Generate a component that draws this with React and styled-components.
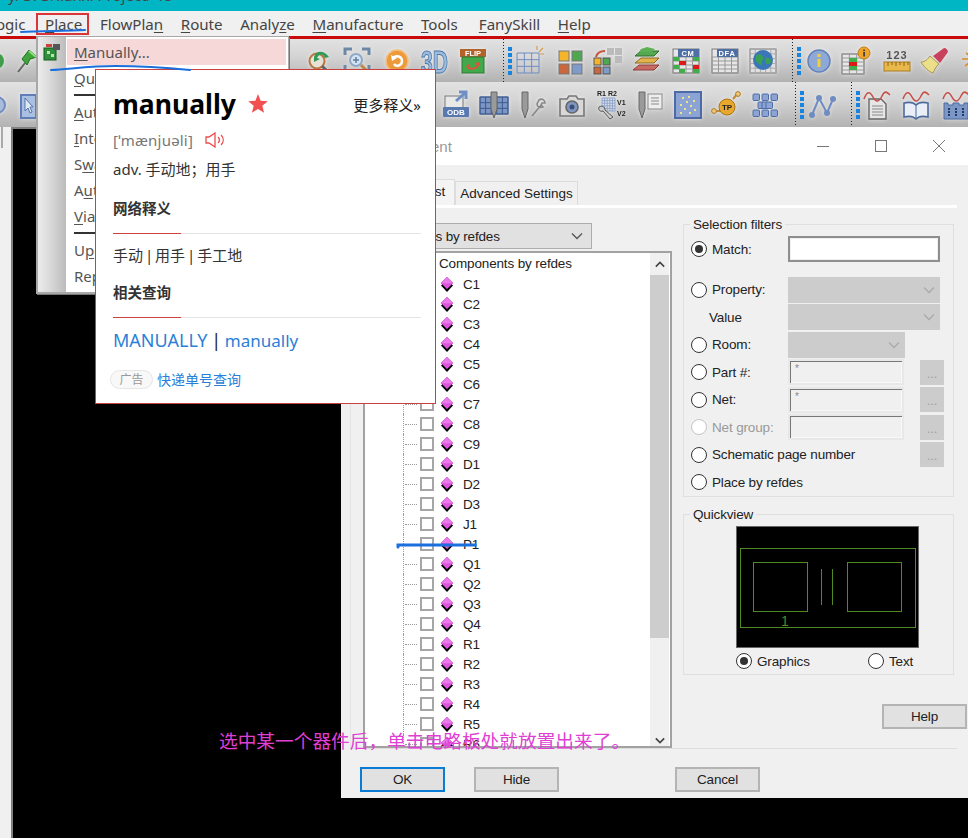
import styled, { createGlobalStyle } from "styled-components";

const GlobalStyle = createGlobalStyle`
  html, body { margin: 0; padding: 0; background: #000; }
  * { box-sizing: border-box; }
`;

const Page = styled.div`
  position: relative;
  width: 968px;
  height: 838px;
  overflow: hidden;
  display: flex;
  flex-direction: column;
  background: #000;
  font-family: "Liberation Sans", sans-serif;
`;

/* top of the app */
const CaptionBar = styled.div`
  height: 11px;
  flex: none;
  overflow: hidden;
  background: #00b6c4;
  color: #444;
  font: 15px/15px "Noto Sans", sans-serif;
  padding-left: 8px;
  span { display: block; margin-top: -12px; white-space: nowrap; }
`;

const MenuBar = styled.div`
  height: 25px;
  flex: none;
  display: flex;
  align-items: center;
  gap: 17.6px;
  background: #f0f0f0;
  margin-left: -12px;
  font: 15.1px "Noto Sans", sans-serif;
  color: #444;
  u { text-underline-offset: 2px; }
`;

const MenuTitle = styled.div`
  position: relative;
  white-space: nowrap;
  margin-left: ${(p) => p.$ml || 0}px;
  ${(p) => p.$active && `
    &::after {
      content: "";
      position: absolute;
      left: -9px;
      right: -7px;
      top: -1px;
      bottom: -1px;
      border: 2px solid #d9363a;
    }
  `}
`;

const RedRule = styled.div`
  height: 3px;
  flex: none;
  background: #c80a0a;
`;

const ToolRow = styled.div`
  height: ${(p) => p.$h}px;
  flex: none;
  display: flex;
  align-items: center;
  overflow: hidden;
  background: linear-gradient(#e2e2e2, #d4d4d4 40%, #b2b2b2);
`;

const ToolSlot = styled.div`
  flex: none;
  display: flex;
  align-items: center;
  justify-content: center;
  height: 100%;
`;

const Ico = styled.svg`
  display: block;
  width: 32px;
  height: 32px;
  flex: none;
  filter: drop-shadow(0 0 2px rgba(255, 255, 255, 0.55));
`;

const DotSep = styled.div`
  width: 1px;
  height: 100%;
  background: repeating-linear-gradient(#222 0 1px, transparent 1px 3px);
`;

const Grip = styled.div`
  width: 4px;
  height: 28px;
  background: repeating-linear-gradient(#1684e0 0 4px, transparent 4px 6px);
`;

const Workspace = styled.div`
  flex: 1;
  display: flex;
`;

const LeftRail = styled.div`
  width: 11px;
  flex: none;
  background: #f0f0f0;
  &::before {
    content: "";
    display: block;
    width: 2px;
    height: 21px;
    margin-left: 1px;
    background: #aaa;
  }
`;

const Canvas = styled.div`
  flex: 1;
  background: #000;
  border-left: 2px solid #808080;
  border-top: 2px solid #808080;
`;

/* place menu */
const DropMenu = styled.div`
  position: absolute;
  left: 36px;
  top: 36px;
  width: 253px;
  height: 258px;
  display: flex;
  background: #fff;
  border: 1px solid #a8a8a8;
  border-width: 1px 1px 2px 2px;
  box-shadow: 1px 1px 0 #777;
  font: 15px "Noto Sans", sans-serif;
  color: #555;
  u { text-underline-offset: 2px; }
`;

const MenuGutter = styled.div`
  width: 28px;
  flex: none;
  background: linear-gradient(90deg, #ececec, #d8d8d8 45%, #bcbcbc);
  padding: 6px 0 0 5px;
`;

const MenuList = styled.div`
  flex: 1;
  padding: 2px 2px 0 1px;
`;

const MenuRow = styled.div`
  height: 26px;
  display: flex;
  align-items: center;
  padding-left: 7px;
  white-space: nowrap;
  background: ${(p) => (p.$hot ? "#f6d8d8" : "transparent")};
`;

const MenuLine = styled.div`
  height: 2px;
  margin: 3px 0 3px 7px;
  background: #333;
`;

/* dictionary popup */
const Popup = styled.div`
  position: absolute;
  left: 95px;
  top: 69px;
  width: 341px;
  height: 335px;
  background: #fff;
  border: 1px solid #c9403f;
  padding: 15px 14px 0 17px;
  font: 15px "Noto Sans", "Noto Sans CJK SC", sans-serif;
  color: #333;
`;

const PopupHead = styled.div`
  height: 38px;
  display: flex;
  align-items: center;
`;

const Word = styled.div`
  font-size: 26.5px;
  font-weight: 700;
  color: #000;
`;

const MoreLink = styled.div`
  margin-left: auto;
  font-size: 15px;
  color: #222;
`;

const Phonetic = styled.div`
  margin-top: 6px;
  height: 22px;
  display: flex;
  align-items: center;
  gap: 12px;
  color: #777;
  font-size: 15px;
  letter-spacing: 0.2px;
`;

const Line = styled.div`
  margin-top: ${(p) => p.$mt}px;
  height: 20px;
  line-height: 20px;
  white-space: nowrap;
  word-spacing: ${(p) => p.$ws || 0}px;
`;

const SectionTitle = styled(Line)`
  font-weight: 700;
  font-size: 14.5px;
  color: #333;
`;

const Divider = styled.div`
  margin-top: 15px;
  height: 1px;
  background: linear-gradient(90deg, #d0403e 68px, #e4e4e4 68px);
`;

const Related = styled.div`
  margin-top: 10px;
  height: 24px;
  line-height: 24px;
  font-size: 18px;
  color: #222;
  word-spacing: -1px;
  a { color: #2a7fd8; }
  a + a { font-size: 17px; word-spacing: 0; }
`;

const AdRow = styled.div`
  margin: 17px 0 0 -3px;
  height: 20px;
  display: flex;
  align-items: center;
  gap: 4px;
`;

const AdPill = styled.div`
  width: 43px;
  height: 19px;
  border: 1px solid #e6e6e6;
  border-radius: 10px;
  background: #f8f8f8;
  color: #999;
  font-size: 12px;
  line-height: 17px;
  text-align: center;
`;

const AdLink = styled.div`
  font-size: 14px;
  color: #2a7fd8;
`;

/* placement dialog */
const Dialog = styled.div`
  position: absolute;
  left: 341px;
  top: 127px;
  width: 627px;
  height: 671px;
  background: #f0f0f0;
  display: flex;
  flex-direction: column;
  font-size: 13.5px;
  letter-spacing: -0.15px;
  color: #222;
`;

const DialogTitle = styled.div`
  height: 38px;
  flex: none;
  background: #fff;
  display: flex;
  align-items: center;
  padding-left: 40px;
  color: #999;
  font-size: 15px;
  letter-spacing: 0;
`;

const TitleButtons = styled.div`
  margin-left: auto;
  display: flex;
`;

const TitleButton = styled.div`
  width: 58px;
  display: flex;
  justify-content: center;
`;

const Tabs = styled.div`
  flex: none;
  display: flex;
  align-items: flex-end;
  padding: 14px 0 0 6px;
`;

const Tab = styled.div`
  height: ${(p) => (p.$on ? 26 : 24)}px;
  width: ${(p) => p.$w}px;
  background: ${(p) => (p.$on ? "#f4f4f4" : "#f0f0f0")};
  border: 1px solid #dcdcdc;
  border-bottom: 0;
  line-height: 24px;
  text-align: center;
  white-space: nowrap;
  letter-spacing: 0;
`;

const Pane = styled.div`
  margin-left: 9px;
  width: 607px;
  height: 544px;
  flex: none;
  display: flex;
  border-top: 3px solid #fff;
  border-left: 1px solid #e4e4e4;
  border-bottom: 1px solid #dedede;
`;

const ListColumn = styled.div`
  margin-left: 12px;
  width: 309px;
  flex: none;
  display: flex;
  flex-direction: column;
  gap: 2px;
  padding-top: 15px;
`;

const Combo = styled.div`
  width: 229px;
  height: 26px;
  flex: none;
  display: flex;
  align-items: center;
  justify-content: space-between;
  padding: 0 8px 0 3px;
  background: #e1e1e1;
  border: 1px solid #adadad;
`;

const TreeFrame = styled.div`
  flex: 1;
  min-height: 0;
  display: flex;
  background: #fff;
  border: 2px solid #a2a2a2;
  padding-right: 1px;
`;

const TreeList = styled.div`
  flex: 1;
  overflow: hidden;
  padding-top: 1px;
`;

const RootRow = styled.div`
  height: 20px;
  line-height: 20px;
  padding-left: 74px;
`;

const TreeRow = styled.div`
  height: 20px;
  display: flex;
  align-items: center;
  padding-left: 38px;
`;

const Guide = styled.div`
  width: 17px;
  height: 20px;
  flex: none;
  display: flex;
  align-items: center;
  border-left: 1px dotted #9a9a9a;
  &::after {
    content: "";
    width: 12px;
    margin-left: 1px;
    border-top: 1px dotted #9a9a9a;
  }
`;

const Check = styled.div`
  width: 14px;
  height: 14px;
  flex: none;
  margin-right: 7px;
  background: #fff;
  border: 2px solid #a6a6a6;
`;

const Gem = styled.svg`
  width: 12px;
  height: 16px;
  flex: none;
  margin-right: 10px;
`;

const Scroller = styled.div`
  width: 19px;
  flex: none;
  display: flex;
  flex-direction: column;
  align-items: center;
  background: #f0f0f0;
`;

const ScrollCap = styled.div`
  height: ${(p) => p.$h}px;
  flex: none;
  display: flex;
  align-items: ${(p) => (p.$end ? "flex-end" : "center")};
  padding-bottom: ${(p) => (p.$end ? 5 : 0)}px;
`;

const ScrollThumb = styled.div`
  width: 19px;
  height: 363px;
  flex: none;
  background: #cdcdcd;
`;

const SideColumn = styled.div`
  margin-left: 11px;
  width: 285px;
  flex: none;
  padding-top: 9px;
  display: flex;
  flex-direction: column;
`;

const Group = styled.fieldset`
  width: 271px;
  margin: 0;
  min-width: 0;
  padding: 4px 7px 0;
  border: 1px solid #dfdfdf;
  height: ${(p) => p.$h}px;
  flex: none;
  & + & { margin-top: 10px; }
`;

const GroupLegend = styled.legend`
  margin-left: -1px;
  padding: 0 3px;
  height: 15px;
  line-height: 15px;
`;

const FilterRow = styled.div`
  height: ${(p) => p.$h || 27.5}px;
  margin-bottom: ${(p) => p.$mb || 0}px;
  display: flex;
  align-items: center;
`;

const Radio = styled.span`
  width: 16px;
  height: 16px;
  flex: none;
  display: flex;
  align-items: center;
  justify-content: center;
  border-radius: 50%;
  background: #fff;
  border: 1px solid ${(p) => (p.$off ? "#c4c4c4" : "#333")};
  &::after {
    content: "";
    width: 8px;
    height: 8px;
    border-radius: 50%;
    background: ${(p) => (p.$on ? "#333" : "transparent")};
  }
`;

const FilterLabel = styled.div`
  width: ${(p) => (p.$plain ? 97 : 81)}px;
  flex: none;
  padding-left: ${(p) => (p.$plain ? 18 : 5)}px;
  white-space: nowrap;
  color: ${(p) => (p.$off ? "#999" : "#222")};
`;

const FilterSpan = styled(FilterLabel)`
  width: auto;
  flex: 1;
`;

const TextField = styled.div`
  width: ${(p) => p.$w}px;
  height: 26px;
  flex: none;
  padding: 2px 0 0 5px;
  font-size: 10px;
  line-height: 12px;
  color: #888;
  background: ${(p) => (p.$white ? "#fff" : "#f0f0f0")};
  border: 2px solid #e8e8e8;
  box-shadow: inset 1px 1px 0 #777, inset -1px -1px 0 #f8f8f8;
  ${(p) => p.$white && `
    border-color: #8e8e8e;
    box-shadow: inset 0 0 0 1px #efefef;
  `}
`;

const GreyCombo = styled.div`
  width: ${(p) => p.$w}px;
  height: 26px;
  flex: none;
  display: flex;
  align-items: center;
  justify-content: flex-end;
  padding-right: 5px;
  background: #cccccc;
`;

const DotsButton = styled.div`
  width: 24px;
  height: 25px;
  flex: none;
  margin-left: ${(p) => p.$ml || 0}px;
  margin-right: ${(p) => p.$mr || 0}px;
  background: #cccccc;
  color: #a0a0a0;
  font-size: 13px;
  line-height: 27px;
  text-align: center;
`;

const ViewScreen = styled.svg`
  display: block;
  width: 183px;
  height: 122px;
  margin-left: 45px;
  background: #000;
  border: 1px solid #666;
`;

const ViewChoices = styled.div`
  margin: 5px 0 0 45px;
  display: flex;
  align-items: center;
  height: 16px;
`;

const ViewChoice = styled.div`
  width: ${(p) => p.$w}px;
  display: flex;
  align-items: center;
  gap: 5px;
`;

const PushButton = styled.div`
  width: 85px;
  height: 25px;
  flex: none;
  background: #e1e1e1;
  border: 2px solid ${(p) => (p.$focus ? "#0a7cd6" : "#b4b4b4")};
  line-height: 21px;
  text-align: center;
  margin-left: ${(p) => p.$ml || 0}px;
`;

const HelpButton = styled(PushButton)`
  margin: 29px 0 0 199px;
`;

const Footer = styled.div`
  flex: none;
  display: flex;
  padding: 18px 0 0 19px;
`;

/* hand drawn notes on top of the screenshot */
const Scribble = styled.svg`
  position: absolute;
  left: 0;
  top: 0;
  width: 968px;
  height: 838px;
  pointer-events: none;
`;

const PinkNote = styled.div`
  position: absolute;
  left: 219px;
  top: 727px;
  font: 18.7px/26px "Noto Sans CJK SC", sans-serif;
  color: #e03fd4;
  white-space: nowrap;
`;

const Down = ({ c = "#555", w = 12 }) => (
  <svg width={w} height={8} viewBox="0 0 12 8">
    <path d="M1 1.5 6 6.5 11 1.5" fill="none" stroke={c} strokeWidth="1.3" />
  </svg>
);

const grid = (x, y, w, h, nx, ny, c) => {
  const out = [];
  for (let i = 0; i <= nx; i++) {
    const px = x + (w * i) / nx;
    out.push(<line key={"x" + i} x1={px} x2={px} y1={y} y2={y + h} stroke={c} />);
  }
  for (let i = 0; i <= ny; i++) {
    const py = y + (h * i) / ny;
    out.push(<line key={"y" + i} x1={x} x2={x + w} y1={py} y2={py} stroke={c} />);
  }
  return out;
};

const Tiny = styled.text`
  font-family: "Liberation Sans", sans-serif;
  font-weight: 700;
`;

const Icon = ({ children }) => <Ico viewBox="0 0 32 32">{children}</Ico>;

const PinIcon = () => (
  <Icon>
    <path d="M8 27 15 18" stroke="#666" strokeWidth="2" />
    <path d="M12 14 19 5l8 7-7 2-3 6z" fill="#3da53a" stroke="#1f6d1f" />
    <path d="M19 6l7 6" stroke="#8fdc7e" strokeWidth="2" />
  </Icon>
);

const ZoomBackIcon = () => (
  <Icon>
    <circle cx="13" cy="16" r="7.5" fill="#e8e2d6" stroke="#b87842" strokeWidth="2" />
    <path d="M18 21 25 28" stroke="#666" strokeWidth="3" />
    <path d="M10 12C12 5 20 5 25 12l-4 1-2-3c-2-1-5 0-6 3l3 1-6 3z" fill="#2f9b57" />
  </Icon>
);

const ZoomFitIcon = () => (
  <Icon>
    <path d="M4 10V4h7M21 4h7v6M28 20v4M4 20v6h7" fill="none" stroke="#6d87a6" strokeWidth="3" />
    <circle cx="15" cy="15" r="6" fill="#d6e3f2" stroke="#8fa8c6" strokeWidth="2" />
    <path d="M15 12v6M12 15h6" stroke="#5f7ea3" strokeWidth="1.5" />
    <path d="M20 20l7 7" stroke="#b88a4a" strokeWidth="3" />
  </Icon>
);

const UndoIcon = () => (
  <Icon>
    <circle cx="16" cy="16" r="11" fill="#ec9a3a" stroke="#f4bd7c" strokeWidth="1.5" />
    <path d="M12 13c3-3 9-2 9 3s-6 6-8 3" fill="none" stroke="#fff" strokeWidth="2.4" />
    <path d="M10 10l1 6 5-3z" fill="#fff" />
  </Icon>
);

const ThreeDIcon = () => (
  <Icon>
    <Tiny x="3" y="28" fontSize="31" textLength="27" lengthAdjust="spacingAndGlyphs" fill="#9dbbdd" stroke="#4a78aa" strokeWidth="1">3D</Tiny>
  </Icon>
);

const FlipIcon = () => (
  <Icon>
    <rect x="3" y="4" width="26" height="8" fill="#b3622a" />
    <Tiny x="16" y="11" fontSize="7.5" fill="#fff" textAnchor="middle">FLIP</Tiny>
    <rect x="5" y="12" width="22" height="16" fill="#42a84a" stroke="#2c7a34" />
    <path d="M10 21c2 4 10 4 12-3M22 18l-3 1M10 21l3-1" fill="none" stroke="#e2503a" strokeWidth="2" />
  </Icon>
);

const GridIcon = () => (
  <Icon>
    {grid(4, 8, 22, 20, 3, 3, "#6f8cc0")}
    <path d="M26 7l4-4M24 5V1M27 9h4" stroke="#d89a4a" strokeWidth="1.2" />
  </Icon>
);

const SquaresIcon = () => (
  <Icon>
    <rect x="5" y="6" width="10" height="10" fill="#f4b52a" stroke="#777" />
    <rect x="18" y="6" width="10" height="10" fill="#4fa84f" stroke="#777" />
    <rect x="5" y="19" width="10" height="10" fill="#c9683f" stroke="#777" />
    <rect x="18" y="19" width="10" height="10" fill="#7f9bc9" stroke="#777" />
  </Icon>
);

const SpreadIcon = () => (
  <Icon>
    <rect x="16" y="3" width="7" height="7" fill="#bbb" />
    <rect x="24" y="3" width="7" height="7" fill="#bbb" />
    <rect x="24" y="11" width="7" height="7" fill="#bbb" />
    <path d="M5 12c1-4 5-6 9-6" fill="none" stroke="#c9503a" strokeWidth="2" />
    <rect x="3" y="13" width="7" height="7" fill="#f4b52a" stroke="#555" />
    <rect x="12" y="13" width="7" height="7" fill="#4fa84f" stroke="#555" />
    <rect x="3" y="22" width="7" height="7" fill="#c9683f" stroke="#555" />
    <rect x="12" y="22" width="7" height="7" fill="#7f9bc9" stroke="#555" />
  </Icon>
);

const LayersIcon = () => (
  <Icon>
    <path d="M2 25l6-5h20l-5 5z" fill="#c86a62" stroke="#8a3c36" />
    <path d="M4 18l6-5h18l-5 5z" fill="#e4b24a" stroke="#8a6a26" />
    <path d="M4 11l6-5h18l-5 5z" fill="#55a84f" stroke="#2f6d2c" />
    <path d="M10 4l6-2 8 2-3 3H8z" fill="#5cb055" />
  </Icon>
);

const TableIcon = ({ label, cells, head = "#4d6fa5" }) => (
  <Icon>
    <rect x="3" y="4" width="26" height="24" fill="#e6e6e6" stroke="#777" />
    {grid(3, 12, 26, 16, 4, 4, "#999")}
    <rect x={label ? 8 : 3} y="4" width={label ? 21 : 0} height="8" fill={head} />
    {label && <Tiny x="18" y="11" fontSize="7.5" fill="#fff" textAnchor="middle" letterSpacing="0.6">{label}</Tiny>}
    {cells}
  </Icon>
);

const cmCells = (
  <>
    <rect x="3" y="12" width="6" height="4" fill="#3fae4b" />
    <rect x="23" y="12" width="6" height="4" fill="#3fae4b" />
    <rect x="9" y="16" width="7" height="4" fill="#e01818" />
    <rect x="3" y="20" width="6" height="4" fill="#3fae4b" />
    <rect x="23" y="20" width="6" height="4" fill="#e01818" />
    <rect x="9" y="24" width="6" height="4" fill="#3fae4b" />
    <rect x="23" y="24" width="6" height="4" fill="#3fae4b" />
  </>
);

const GlobeIcon = () => (
  <Icon>
    <rect x="3" y="4" width="26" height="24" fill="#e0e0e0" stroke="#777" />
    {grid(3, 4, 26, 24, 5, 5, "#aaa")}
    <circle cx="16" cy="15" r="10" fill="#3a76b8" />
    <path d="M9 11c3-3 6-2 7 1s-2 4-1 7-5-1-6-3zM19 13c3-1 5 1 5 3s-2 4-4 3-2-5-1-6z" fill="#37a055" />
  </Icon>
);

const InfoIcon = () => (
  <Icon>
    <circle cx="16" cy="16" r="11" fill="#8fa9d6" stroke="#6482b8" strokeWidth="1.5" />
    <rect x="14.5" y="14" width="3" height="8" fill="#f2cf3a" />
    <rect x="14.5" y="9" width="3" height="3" fill="#f2cf3a" />
  </Icon>
);

const TableBadgeIcon = () => (
  <Icon>
    <rect x="2" y="9" width="22" height="20" fill="#e6e6e6" stroke="#777" />
    {grid(2, 9, 22, 20, 3, 5, "#999")}
    <rect x="9" y="17" width="8" height="4" fill="#e01818" />
    <rect x="9" y="21" width="8" height="4" fill="#3fae4b" />
    <rect x="9" y="13" width="8" height="4" fill="#3fae4b" />
    <circle cx="24" cy="8" r="6" fill="#f0a52a" stroke="#c07c12" />
    <rect x="23.2" y="7" width="1.8" height="4.5" fill="#444" />
    <rect x="23.2" y="4.5" width="1.8" height="1.6" fill="#444" />
  </Icon>
);

const RulerIcon = () => (
  <Icon>
    <Tiny x="16" y="14" fontSize="11" fill="#555" textAnchor="middle" letterSpacing="1">123</Tiny>
    <rect x="3" y="17" width="26" height="9" fill="#e8b84a" stroke="#a87a20" />
    <path d="M7 17v4M11 17v3M15 17v4M19 17v3M23 17v4M27 17v3" stroke="#8a6216" />
  </Icon>
);

const BrushIcon = () => (
  <Icon>
    <path d="M3 17c4 0 7-3 9-6l9 8c-3 2-4 5-6 9-4-1-9-6-12-11z" fill="#ecdf8a" stroke="#a8934a" />
    <path d="M15 11 26 3c2 0 4 2 4 4l-8 11z" fill="#c9405c" />
  </Icon>
);

const RaysIcon = () => (
  <Icon>
    <path d="M12 8l4 3M8 14h6M11 21l4-3M17 4v5" stroke="#dc8a2e" strokeWidth="1.6" />
  </Icon>
);

const CursorIcon = () => (
  <Icon>
    <rect x="4" y="6" width="15" height="23" fill="#a9c0e2" stroke="#5f7eb8" strokeWidth="2" />
    <path d="M8 9v13l3-3 2 5 2-1-2-5h3z" fill="#dfe8f5" stroke="#5874a8" />
  </Icon>
);

const GreenArcIcon = () => (
  <Icon>
    <circle cx="8" cy="16" r="8" fill="#3f9e4a" />
  </Icon>
);

const BlueArcIcon = () => (
  <Icon>
    <circle cx="8" cy="16" r="8" fill="#a9bcdc" stroke="#6f8cc0" strokeWidth="2" />
  </Icon>
);

const OdbIcon = () => (
  <Icon>
    <rect x="5" y="7" width="18" height="14" fill="#e8e8e8" stroke="#777" />
    <path d="M16 12 25 4M19 3h7v7" fill="none" stroke="#6d8fc6" strokeWidth="3" />
    <rect x="3" y="18" width="26" height="10" rx="1" fill="#5878b0" />
    <Tiny x="16" y="26" fontSize="8" fill="#fff" textAnchor="middle">ODB</Tiny>
  </Icon>
);

const Drill = ({ x = 16 }) => (
  <path
    d={`M${x - 3} 3h6v17l-3 9-3-9z`}
    fill="#9a9a9a"
    stroke="#666"
  />
);

const MeshIcon = () => (
  <Icon>
    <rect x="2" y="8" width="28" height="17" fill="#7c96c6" stroke="#4d6a9e" />
    {grid(2, 8, 28, 17, 5, 3, "#3f5a8e")}
    <Drill />
  </Icon>
);

const DrillWrenchIcon = () => (
  <Icon>
    <Drill x={9} />
    <path d="M16 27 26 15M23 11c3-2 6 0 6 3l-3 0-1 2 2 2c-3 1-6 0-6-3z" fill="#ddd" stroke="#888" strokeWidth="1.6" />
  </Icon>
);

const CameraIcon = () => (
  <Icon>
    <path d="M4 10h7l2-3h7l2 3h6v17H4z" fill="#d8d8d8" stroke="#777" strokeWidth="1.6" />
    <circle cx="16" cy="18" r="6" fill="#7f97c2" stroke="#666" strokeWidth="1.6" />
    <circle cx="16" cy="18" r="2.5" fill="#394f78" />
  </Icon>
);

const RefdesIcon = () => (
  <Icon>
    <Tiny x="2" y="7" fontSize="7" fill="#222">R1 R2</Tiny>
    <Tiny x="22" y="16" fontSize="7" fill="#222">V1</Tiny>
    <Tiny x="22" y="27" fontSize="7" fill="#222">V2</Tiny>
    {grid(7, 9, 13, 13, 5, 5, "#8fa6cf")}
    <path d="M4 18c3-2 6 0 6 3l8 7-3 2-7-8c-3 1-5-1-4-4z" fill="#ccc" stroke="#555" />
  </Icon>
);

const DrillListIcon = () => (
  <Icon>
    <Drill x={9} />
    <rect x="15" y="5" width="14" height="15" fill="#eee" stroke="#888" />
    <path d="M18 9h8M18 12h8M18 15h8" stroke="#888" />
  </Icon>
);

const PanelIcon = () => (
  <Icon>
    <rect x="3" y="3" width="26" height="26" fill="#8ba4d4" stroke="#4d6aa4" strokeWidth="2" />
    <path d="M10 8h2v2h-2zM16 7h2v2h-2zM21 11h2v2h-2zM14 12h2v2h-2zM8 15h2v2H8zM18 16h2v2h-2zM12 19h2v2h-2zM22 20h2v2h-2zM8 23h2v2H8zM17 23h2v2h-2z" fill="#f0e28a" />
  </Icon>
);

const TestPointIcon = () => (
  <Icon>
    <path d="M2 22h8M23 10l5-6" stroke="#c08a3a" strokeWidth="2" />
    <circle cx="4" cy="22" r="2.4" fill="#eec87c" stroke="#b07820" />
    <circle cx="28" cy="5" r="2.4" fill="#eec87c" stroke="#b07820" />
    <circle cx="17" cy="18" r="8" fill="#e8a82e" stroke="#a87410" />
    <Tiny x="17" y="21" fontSize="8" fill="#222" textAnchor="middle">TP</Tiny>
  </Icon>
);

const BlocksIcon = () => (
  <Icon>
    {[5, 13, 21].flatMap((y, r) =>
      [4, 13, 22].map((x, i) => (
        <rect key={r + "-" + i} x={r === 1 ? x + (i === 1 ? 0 : i === 0 ? 5 : -5) : x} y={y} width="6.5" height="6.5" rx="1" fill="#8ba4d4" stroke="#4d6aa4" />
      ))
    )}
  </Icon>
);

const GraphIcon = () => (
  <Icon>
    <path d="M6 26 13 9 21 24 27 10" fill="none" stroke="#6f8cc0" strokeWidth="2" />
    <circle cx="6" cy="26" r="3" fill="#6f8cc0" />
    <circle cx="13" cy="9" r="3" fill="#6f8cc0" />
    <circle cx="21" cy="24" r="3" fill="#6f8cc0" />
    <circle cx="27" cy="10" r="3" fill="#6f8cc0" />
  </Icon>
);

const Wave = () => <path d="M3 10c3-8 6-8 9-2s6 5 9-1 5-4 8-1" fill="none" stroke="#c5524a" strokeWidth="1.6" />;

const DocWaveIcon = () => (
  <Icon>
    <path d="M8 10h12l5 5v15H8z" fill="#e6e6e6" stroke="#666" strokeWidth="1.4" />
    <path d="M11 17h11M11 20h11M11 23h11M11 26h11" stroke="#888" />
    <Wave />
  </Icon>
);

const BookWaveIcon = () => (
  <Icon>
    <path d="M4 14c4-1 9-1 12 2 3-3 8-3 12-2v14c-4-1-9-1-12 2-3-3-8-3-12-2z" fill="#eaeef6" stroke="#4d6a9e" strokeWidth="1.6" />
    <path d="M16 16v14" stroke="#4d6a9e" />
    <Wave />
  </Icon>
);

const ChipWaveIcon = () => (
  <Icon>
    <path d="M4 14h4v2h5v-2h6v2h5v-2h4v16H4z" fill="#7c96c6" stroke="#4d6a9e" />
    <path d="M9 19v8M16 19v8M23 19v8" stroke="#223a66" strokeWidth="2" strokeDasharray="2 1" />
    <Wave />
  </Icon>
);

const icon = (x, Comp, props) => ({ x: x - 16, w: 32, node: <Comp {...props} /> });
const sep = (x) => ({ x, w: 1, node: <DotSep /> });
const grip = (x) => ({ x, w: 4, node: <Grip /> });

const topTools = [
  icon(4, GreenArcIcon),
  icon(26, PinIcon),
  icon(320, ZoomBackIcon),
  icon(357, ZoomFitIcon),
  icon(397, UndoIcon),
  icon(434, ThreeDIcon),
  icon(473, FlipIcon),
  sep(503),
  grip(508),
  icon(529, GridIcon),
  icon(570, SquaresIcon),
  icon(607, SpreadIcon),
  icon(647, LayersIcon),
  icon(686, TableIcon, { label: "CM", cells: cmCells }),
  icon(725, TableIcon, { label: "DFA" }),
  icon(763, GlobeIcon),
  sep(792),
  grip(797),
  icon(819, InfoIcon),
  icon(856, TableBadgeIcon),
  icon(897, RulerIcon),
  icon(934, BrushIcon),
  icon(970, RaysIcon),
];

const lowTools = [
  icon(5, BlueArcIcon),
  icon(33, CursorIcon),
  icon(456, OdbIcon),
  icon(494, MeshIcon),
  icon(532, DrillWrenchIcon),
  icon(572, CameraIcon),
  icon(611, RefdesIcon),
  icon(649, DrillListIcon),
  icon(688, PanelIcon),
  icon(726, TestPointIcon),
  icon(765, BlocksIcon),
  sep(795),
  grip(800),
  icon(822, GraphIcon),
  sep(851),
  grip(856),
  icon(877, DocWaveIcon),
  icon(916, BookWaveIcon),
  icon(956, ChipWaveIcon),
];

function Tools({ items, h }) {
  let edge = 0;
  return (
    <ToolRow $h={h}>
      {items.map((t, i) => {
        const gap = t.x - edge;
        edge = t.x + t.w;
        return (
          <ToolSlot key={i} style={{ width: t.w, marginLeft: gap }}>
            {t.node}
          </ToolSlot>
        );
      })}
    </ToolRow>
  );
}

const parts = [
  "C1", "C2", "C3", "C4", "C5", "C6", "C7", "C8", "C9",
  "D1", "D2", "D3", "J1", "P1", "Q1", "Q2", "Q3", "Q4",
  "R1", "R2", "R3", "R4", "R5", "R6",
];

const GemIcon = () => (
  <Gem viewBox="0 0 12 16">
    <path d="M6 4 12 9.5 6 16 0 9.5z" fill="#000" />
    <path d="M6 1 12 7 6 13 0 7z" fill="#dd55dd" stroke="#a030a8" strokeWidth="0.5" />
    <path d="M6 1 12 7 6 7.5 0 7z" fill="#ea7aea" />
  </Gem>
);

function PartRow({ name }) {
  return (
    <TreeRow>
      <Guide />
      <Check />
      <GemIcon />
      {name}
    </TreeRow>
  );
}

const Filter = ({ label, on, off, children, h, mb }) => (
  <FilterRow $h={h} $mb={mb}>
    <Radio $on={on} $off={off} />
    <FilterLabel $off={off}>{label}</FilterLabel>
    {children}
  </FilterRow>
);

export default function App() {
  return (
    <Page>
      <GlobalStyle />
      <CaptionBar>
        <span>y/OrO/lianxi Project/ 15</span>
      </CaptionBar>
      <MenuBar>
        <MenuTitle>Logic</MenuTitle>
        <MenuTitle $active $ml={2}><u>P</u>lace</MenuTitle>
        <MenuTitle>FlowPla<u>n</u></MenuTitle>
        <MenuTitle><u>R</u>oute</MenuTitle>
        <MenuTitle>Analy<u>z</u>e</MenuTitle>
        <MenuTitle><u>M</u>anufacture</MenuTitle>
        <MenuTitle><u>T</u>ools</MenuTitle>
        <MenuTitle $ml={3.5}><u>F</u>anySkill</MenuTitle>
        <MenuTitle><u>H</u>elp</MenuTitle>
      </MenuBar>
      <RedRule />
      <Tools items={topTools} h={43} />
      <Tools items={lowTools} h={45} />
      <Workspace>
        <LeftRail />
        <Canvas />
      </Workspace>

      <Dialog>
        <DialogTitle>
          Placement
          <TitleButtons>
            <TitleButton>
              <svg width="12" height="12"><path d="M0 6.5h12" stroke="#777" /></svg>
            </TitleButton>
            <TitleButton>
              <svg width="12" height="12"><rect x=".5" y=".5" width="11" height="11" fill="none" stroke="#777" /></svg>
            </TitleButton>
            <TitleButton>
              <svg width="12" height="12"><path d="M0 0 12 12M12 0 0 12" stroke="#777" /></svg>
            </TitleButton>
          </TitleButtons>
        </DialogTitle>
        <Tabs>
          <Tab $on $w={108}>Placement List</Tab>
          <Tab $w={123}>Advanced Settings</Tab>
        </Tabs>
        <Pane>
          <ListColumn>
            <Combo>
              Components by refdes
              <Down />
            </Combo>
            <TreeFrame>
              <TreeList>
                <RootRow>Components by refdes</RootRow>
                {parts.map((p) => (
                  <PartRow key={p} name={p} />
                ))}
              </TreeList>
              <Scroller>
                <ScrollCap $h={22}>
                  <svg width="10" height="7" viewBox="0 0 12 8"><path d="M1 6.5 6 1.5 11 6.5" fill="none" stroke="#444" strokeWidth="2" /></svg>
                </ScrollCap>
                <ScrollThumb />
                <ScrollCap $h={111} $end>
                  <svg width="10" height="7" viewBox="0 0 12 8"><path d="M1 1.5 6 6.5 11 1.5" fill="none" stroke="#444" strokeWidth="2" /></svg>
                </ScrollCap>
              </Scroller>
            </TreeFrame>
          </ListColumn>
          <SideColumn>
            <Group $h={280}>
              <GroupLegend>Selection filters</GroupLegend>
              <Filter label="Match:" on h={26} mb={14}>
                <TextField $w={152} $white />
              </Filter>
              <Filter label="Property:">
                <GreyCombo $w={152}><Down c="#aaa" /></GreyCombo>
              </Filter>
              <FilterRow>
                <FilterLabel $plain>Value</FilterLabel>
                <GreyCombo $w={152}><Down c="#aaa" /></GreyCombo>
              </FilterRow>
              <Filter label="Room:">
                <GreyCombo $w={117}><Down c="#aaa" /></GreyCombo>
              </Filter>
              <Filter label="Part #:">
                <TextField $w={116}>*</TextField>
                <DotsButton $ml={16}>...</DotsButton>
              </Filter>
              <Filter label="Net:">
                <TextField $w={116}>*</TextField>
                <DotsButton $ml={16}>...</DotsButton>
              </Filter>
              <Filter label="Net group:" off>
                <TextField $w={116} />
                <DotsButton $ml={16}>...</DotsButton>
              </Filter>
              <FilterRow>
                <Radio />
                <FilterSpan>Schematic page number</FilterSpan>
                <DotsButton $mr={2}>...</DotsButton>
              </FilterRow>
              <FilterRow>
                <Radio />
                <FilterSpan>Place by refdes</FilterSpan>
              </FilterRow>
            </Group>
            <Group $h={168}>
              <GroupLegend>Quickview</GroupLegend>
              <ViewScreen viewBox="0 0 181 120">
                <g fill="none" stroke="#4f8a24">
                  <rect x="3.5" y="21.5" width="175" height="79" />
                  <rect x="16.5" y="35.5" width="54" height="49" />
                  <rect x="110.5" y="35.5" width="54" height="49" />
                  <path d="M84.5 42v36M95.5 42v36" />
                </g>
                <text x="44" y="99" fill="#4f8a24" fontSize="14" fontFamily="Liberation Sans">1</text>
              </ViewScreen>
              <ViewChoices>
                <ViewChoice $w={132}><Radio $on />Graphics</ViewChoice>
                <ViewChoice $w={60}><Radio />Text</ViewChoice>
              </ViewChoices>
            </Group>
            <HelpButton>Help</HelpButton>
          </SideColumn>
        </Pane>
        <Footer>
          <PushButton $focus>OK</PushButton>
          <PushButton $ml={29}>Hide</PushButton>
          <PushButton $ml={116}>Cancel</PushButton>
        </Footer>
      </Dialog>

      <DropMenu>
        <MenuGutter>
          <svg width="18" height="18" viewBox="0 0 18 18">
            <rect x="1" y="5" width="12" height="12" fill="#2f8f3a" stroke="#145a1e" />
            <path d="M4 8h3v3H4zM8 11h3v3H8z" fill="#b8e6a8" />
            <rect x="3" y="1" width="6" height="3" fill="#c8433a" />
            <rect x="10" y="1" width="7" height="6" fill="#555" />
          </svg>
        </MenuGutter>
        <MenuList>
          <MenuRow $hot><span><u>M</u>anually...</span></MenuRow>
          <MenuRow><span><u>Q</u>uickplace...</span></MenuRow>
          <MenuLine />
          <MenuRow><span><u>A</u>utoplace</span></MenuRow>
          <MenuRow><span><u>I</u>nteractive</span></MenuRow>
          <MenuRow><span>S<u>w</u>ap</span></MenuRow>
          <MenuRow><span>A<u>u</u>toswap</span></MenuRow>
          <MenuRow><span><u>V</u>ia Array</span></MenuRow>
          <MenuLine />
          <MenuRow><span>U<u>p</u>date Symbols...</span></MenuRow>
          <MenuRow><span>Replicate</span></MenuRow>
        </MenuList>
      </DropMenu>

      <Popup>
        <PopupHead>
          <Word>manually</Word>
          <svg width="20" height="20" viewBox="0 0 20 20" style={{ marginLeft: 12 }}>
            <path d="M10 0l2.6 6.7 7.2.5-5.5 4.6 1.8 7-6.1-3.9-6.1 3.9 1.8-7L.2 7.2l7.2-.5z" fill="#f25050" />
          </svg>
          <MoreLink>更多释义»</MoreLink>
        </PopupHead>
        <Phonetic>
          [ˈmænjuəli]
          <svg width="20" height="16" viewBox="0 0 20 16" fill="none" stroke="#ee4d4d" strokeWidth="1.3">
            <path d="M1 5h3l6-4v14l-6-4H1z" />
            <path d="M13 5c2 2 2 4 0 6M16 3c3 3 3 7 0 10" />
          </svg>
        </Phonetic>
        <Line $mt={8}>adv. 手动地；用手</Line>
        <SectionTitle $mt={19}>网络释义</SectionTitle>
        <Divider />
        <Line $mt={11} $ws={-2}>手动 | 用手 | 手工地</Line>
        <SectionTitle $mt={17}>相关查询</SectionTitle>
        <Divider />
        <Related>
          <a>MANUALLY</a> | <a>manually</a>
        </Related>
        <AdRow>
          <AdPill>广告</AdPill>
          <AdLink>快递单号查询</AdLink>
        </AdRow>
      </Popup>

      <PinkNote>选中某一个器件后，单击电路板处就放置出来了。</PinkNote>

      <Scribble viewBox="0 0 968 838">
        <g fill="none" stroke="#1a6fdc" strokeLinecap="round">
          <path d="M21 32C40 31 65 31 85 30" strokeWidth="2" />
          <path d="M51 70C70 69 90 66 115 66S170 68 190 70" strokeWidth="2" />
          <path d="M398 547V545H475" strokeWidth="3" />
        </g>
      </Scribble>
    </Page>
  );
}
